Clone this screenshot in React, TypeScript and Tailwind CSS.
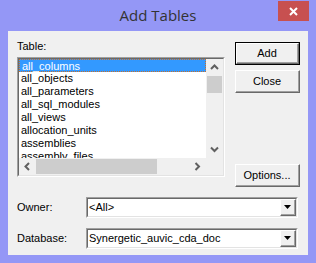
import type { ReactNode } from 'react';

const items = ['all_columns', 'all_objects', 'all_parameters', 'all_sql_modules', 'all_views', 'allocation_units', 'assemblies', 'assembly_files'];

function Chevron({ dir }: { dir: 'up' | 'down' | 'left' | 'right' }) {
  const d = {
    up: 'M1 5 L4.5 1.5 L8 5',
    down: 'M1 1.5 L4.5 5 L8 1.5',
    left: 'M5 1 L1.5 4.5 L5 8',
    right: 'M1.5 1 L5 4.5 L1.5 8',
  }[dir];
  const vertical = dir === 'up' || dir === 'down';
  return (
    <svg width={vertical ? 9 : 7} height={vertical ? 7 : 9} viewBox={vertical ? '0 0 9 7' : '0 0 7 9'}>
      <path d={d} fill="none" stroke="#606060" strokeWidth="2" />
    </svg>
  );
}

function Button({ children, isDefault }: { children: ReactNode; isDefault?: boolean }) {
  return (
    <div className={`h-[23px] w-[65px] ${isDefault ? 'border border-black' : ''}`}>
      <div className="h-full w-full border-t border-l border-t-white border-l-white border-r border-b border-r-[#696969] border-b-[#696969]">
        <div className="h-full w-full border-r border-b border-r-[#a0a0a0] border-b-[#a0a0a0] bg-[#f0f0f0] flex items-center justify-center text-[11px] text-black">
          {children}
        </div>
      </div>
    </div>
  );
}

function Sunken({ children, className }: { children: ReactNode; className: string }) {
  return (
    <div className={`border-t border-l border-t-[#a0a0a0] border-l-[#a0a0a0] border-r border-b border-r-white border-b-white ${className}`}>
      <div className="h-full w-full border-t border-l border-t-[#696969] border-l-[#696969] border-r border-b border-r-[#e3e3e3] border-b-[#e3e3e3] bg-white">
        {children}
      </div>
    </div>
  );
}

function Combo({ value }: { value: string }) {
  return (
    <Sunken className="h-[21px] w-[212px]">
      <div className="flex h-full items-center">
        <span className="flex-1 pl-[1px] text-[11px] leading-[13px] text-black">{value}</span>
        <div className="h-[17px] w-[16px] border-t border-l border-t-white border-l-white border-r border-b border-r-[#696969] border-b-[#696969]">
          <div className="h-full w-full border-r border-b border-r-[#a0a0a0] border-b-[#a0a0a0] bg-[#f0f0f0] flex items-center justify-center">
            <svg width="7" height="4" viewBox="0 0 7 4"><path d="M0 0 H7 L3.5 4 Z" fill="#000" /></svg>
          </div>
        </div>
      </div>
    </Sunken>
  );
}

export default function App() {
  return (
    <div className="w-[316px] h-[263px] bg-[#9497f6] flex flex-col" style={{ fontFamily: '"Liberation Sans", Arial, sans-serif' }}>
      <div className="h-[31px] grid grid-cols-[38px_1fr_38px]">
        <div />
        <div className="flex items-center justify-center pb-[1px] text-[15px] text-[#333]" style={{ fontFamily: '"Open Sans", "Noto Sans", sans-serif' }}>
          Add Tables
        </div>
        <div className="pt-[1px]">
          <div className="w-[31px] h-[20px] bg-[#c75050] flex items-center justify-center">
            <svg width="9" height="9" viewBox="0 0 9 9"><path d="M1 1 L8 8 M8 1 L1 8" stroke="#fff" strokeWidth="2" /></svg>
          </div>
        </div>
      </div>

      <div className="mx-[8px] h-[224px] bg-[#f0f0f0] pl-[9px] pt-[9px]">
        <div className="flex items-start">
          <div className="w-[208px]">
            <div className="h-[17px] text-[11px] leading-[13px] text-black">Table:</div>
            <Sunken className="h-[120px] w-[208px]">
              <div className="flex flex-col h-full">
                <div className="flex h-[99px]">
                  <div className="w-[187px] overflow-hidden">
                    {items.map((it, i) => (
                      <div
                        key={it}
                        className={`h-[13px] pl-[2px] text-[11px] leading-[12px] whitespace-nowrap ${i === 0 ? 'bg-[#3399ff] text-white border border-dotted border-[#c8702a]' : 'text-black'}`}
                      >
                        {it}
                      </div>
                    ))}
                  </div>
                  <div className="w-[17px] bg-[#f0f0f0] flex flex-col">
                    <div className="h-[17px] flex items-center justify-center"><Chevron dir="up" /></div>
                    <div className="mx-[1px] h-[17px] bg-[#cdcdcd]" />
                    <div className="flex-1" />
                    <div className="h-[17px] flex items-center justify-center"><Chevron dir="down" /></div>
                  </div>
                </div>
                <div className="flex h-[17px] bg-[#f0f0f0]">
                  <div className="w-[17px] flex items-center justify-center"><Chevron dir="left" /></div>
                  <div className="my-[1px] w-[121px] bg-[#cdcdcd]" />
                  <div className="flex-1" />
                  <div className="w-[17px] flex items-center justify-center"><Chevron dir="right" /></div>
                  <div className="w-[17px]" />
                </div>
              </div>
            </Sunken>
          </div>

          <div className="ml-[10px] pt-[2px] flex flex-col">
            <Button isDefault>Add</Button>
            <div className="mt-[5px]"><Button>Close</Button></div>
            <div className="mt-[71px]"><Button>Options...</Button></div>
          </div>
        </div>

        <div className="mt-[10px] flex items-center">
          <span className="w-[69px] text-[11px] text-black">Owner:</span>
          <Combo value="<All>" />
        </div>
        <div className="mt-[10px] flex items-center">
          <span className="w-[69px] text-[11px] text-black">Database:</span>
          <Combo value="Synergetic_auvic_cda_doc" />
        </div>
      </div>
    </div>
  );
}
